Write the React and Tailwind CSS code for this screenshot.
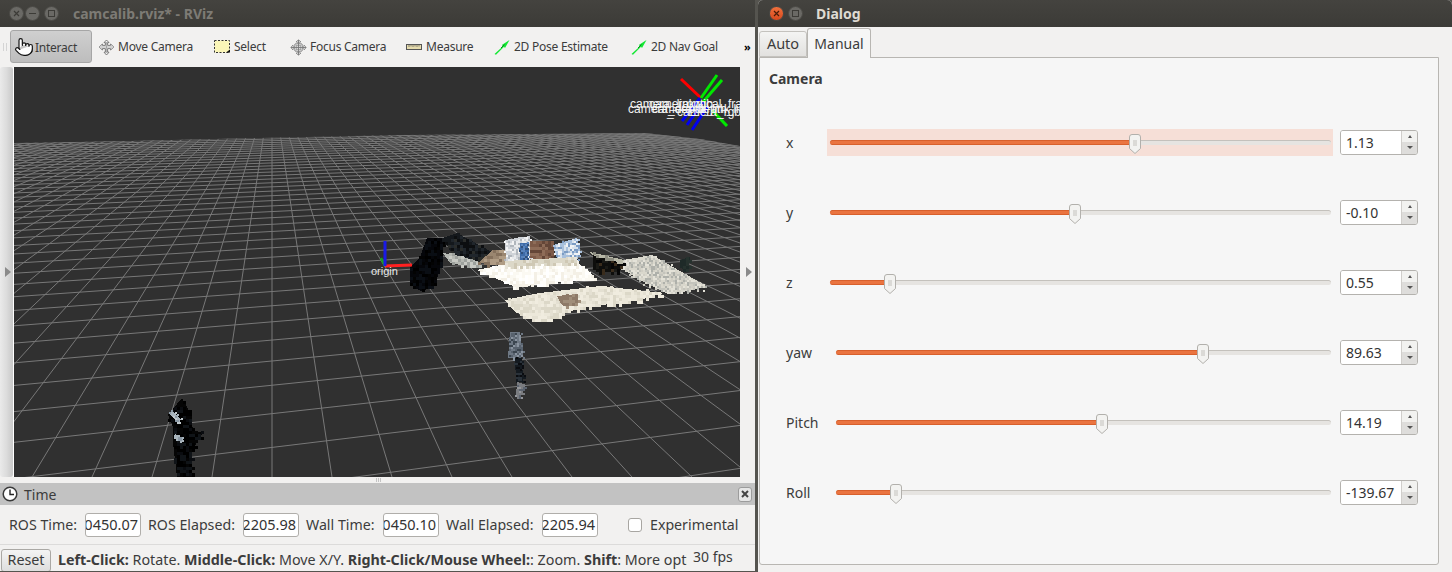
import { Pointer } from 'lucide-react'

const FONT = { fontFamily: '"Noto Sans", sans-serif' }

function rng(seed) {
  let s = seed
  return () => {
    s = (s * 16807) % 2147483647
    return s / 2147483647
  }
}

function inside(pts, x, y) {
  let hit = false
  for (let i = 0, j = pts.length - 1; i < pts.length; j = i++) {
    const [xi, yi] = pts[i]
    const [xj, yj] = pts[j]
    if (yi > y !== yj > y && x < ((xj - xi) * (y - yi)) / (yj - yi) + xi) hit = !hit
  }
  return hit
}

// blocky point cloud patch, looks like the rviz voxels
function Cloud({ pts, colors, seed, size = 3 }) {
  const r = rng(seed)
  const xs = pts.map(p => p[0])
  const ys = pts.map(p => p[1])
  const cells = []
  for (let x = Math.min(...xs) - 3; x < Math.max(...xs) + 3; x += size) {
    for (let y = Math.min(...ys) - 3; y < Math.max(...ys) + 3; y += size) {
      const jx = (r() - 0.5) * 4
      const jy = (r() - 0.5) * 4
      if (inside(pts, x + jx, y + jy)) {
        cells.push(<rect key={`${x}-${y}`} x={x} y={y} width={size} height={size} fill={colors[Math.floor(r() * colors.length)]} />)
      }
    }
  }
  return (
    <g shapeRendering="crispEdges">
      <polygon points={pts.map(p => p.join(',')).join(' ')} fill={colors[0]} />
      {cells}
    </g>
  )
}

const VP1 = [272, 80]
const VP2 = [3500, 55]
const FAR_EDGE = '14,143 130,141 260,138 400,135 535,134 645,133 700,139 740,146 740,477 14,477'

function Grid() {
  const lines = []
  for (let k = -60; k < 90; k++) {
    const bx = 272 + 60 * k
    lines.push(<line key={`a${k}`} x1={VP1[0]} y1={VP1[1]} x2={bx} y2={477} />)
  }
  for (let n = -8; n < 46; n++) {
    const v = 0.003509 + 0.00024 * n
    if (v <= 0) continue
    const y = VP2[1] + 1 / v
    const slope = (y - VP2[1]) / (VP2[0] - 273)
    lines.push(<line key={`b${n}`} x1={14} y1={y + slope * 259} x2={740} y2={y - slope * 467} />)
  }
  return (
    <g>
      <defs>
        <clipPath id="floor">
          <polygon points={FAR_EDGE} />
        </clipPath>
      </defs>
      <g clipPath="url(#floor)">
        <polygon points={FAR_EDGE} fill="#303030" />
        <g stroke="#787878" strokeWidth="1">{lines}</g>
      </g>
    </g>
  )
}

function Scene() {
  return (
    <svg className="block w-full h-full" viewBox="14 67 726 410">
      <rect x="14" y="67" width="726" height="410" fill="#303030" />
      <Grid />

      {/* person far left */}
      <Cloud seed={11} pts={[[182, 398], [190, 413], [193, 430], [203, 433], [190, 453], [192, 477], [177, 477], [173, 443], [173, 427], [168, 415]]} colors={['#050505', '#000000', '#0a0c10', '#000000', '#101418']} />
      <Cloud seed={12} size={2} pts={[[168, 413], [172, 411], [181, 419], [179, 423]]} colors={['#a8b4bc', '#c0c8cc', '#8a98a4']} />
      <Cloud seed={13} size={2} pts={[[175, 434], [183, 438], [184, 442], [176, 440]]} colors={['#a8b4bc', '#8a98a4']} />

      {/* person center */}
      <Cloud seed={14} size={2} pts={[[510, 332], [520, 332], [522, 357], [508, 358]]} colors={['#6e7884', '#58626e', '#8a94a0', '#3c4650']} />
      <Cloud seed={15} size={2} pts={[[515, 358], [522, 358], [523, 382], [516, 382]]} colors={['#141a20', '#0a0c10', '#2a323a']} />
      <Cloud seed={16} size={2} pts={[[517, 382], [526, 385], [520, 397], [516, 397]]} colors={['#7a7c80', '#5c6470', '#94969a']} />

      {/* floor patches */}
      <Cloud seed={21} pts={[[477, 270], [510, 263], [575, 260], [595, 277], [545, 284], [515, 287], [495, 278]]} colors={['#fbf9f2', '#ffffff', '#f4f0e6', '#fffefa']} />
      <Cloud seed={22} pts={[[505, 300], [540, 293], [600, 286], [664, 293], [640, 300], [580, 308], [540, 322], [515, 312]]} colors={['#ece8da', '#f0ecdf', '#e4e0d2', '#dcd8c8']} />
      <Cloud seed={23} size={3} pts={[[557, 296], [578, 294], [577, 303], [562, 305]]} colors={['#8e7a68', '#a08e7a']} />
      <Cloud seed={24} size={2} pts={[[612, 262], [652, 255], [708, 287], [668, 294], [640, 280]]} colors={['#d9d7cc', '#c4c4bc', '#e4e2d8', '#aeb0aa', '#d0cec4']} />

      {/* dark wall left and ridge */}
      <Cloud seed={25} pts={[[427, 238], [444, 238], [441, 257], [437, 280], [423, 292], [410, 285], [410, 267], [420, 257]]} colors={['#05060a', '#000000', '#0a0e14', '#030303']} />
      <Cloud seed={26} pts={[[442, 238], [457, 233], [492, 252], [477, 265], [455, 258]]} colors={['#14181c', '#20262c', '#0c0e10', '#2a2c2a']} />
      <Cloud seed={27} pts={[[443, 253], [460, 256], [480, 262], [480, 267], [450, 263]]} colors={['#b5b8b2', '#9ca09c', '#c8cac4']} />

      {/* objects on the table */}
      <Cloud seed={28} pts={[[478, 263], [493, 250], [510, 250], [507, 265]]} colors={['#9a8670', '#84705c', '#b09c84']} />
      <Cloud seed={29} size={2} pts={[[505, 240], [530, 236], [532, 260], [506, 264]]} colors={['#cfd3d8', '#e8eaec', '#b0b6bc', '#f4f4f4']} />
      <Cloud seed={30} size={2} pts={[[520, 243], [528, 243], [528, 260], [520, 260]]} colors={['#3d6ba8', '#5a84bc', '#30507c']} />
      <Cloud seed={31} pts={[[530, 241], [551, 241], [555, 256], [530, 258]]} colors={['#7d5a48', '#8e6c58', '#644638']} />
      <Cloud seed={32} size={2} pts={[[553, 245], [577, 238], [581, 257], [557, 258]]} colors={['#a8c0dc', '#d8e2ec', '#7c9cc4', '#f0f2f4']} />
      <Cloud seed={33} pts={[[505, 261], [575, 257], [575, 262], [505, 267]]} colors={['#dcd8c8', '#cfc8b4', '#e8e4d8']} />

      {/* dark patch right of table */}
      <Cloud seed={34} pts={[[593, 254], [623, 262], [620, 272], [593, 270]]} colors={['#0e0e0c', '#1a1a16', '#060606', '#3a2c1c']} />
      <Cloud seed={35} pts={[[590, 252], [624, 260], [622, 263], [592, 255]]} colors={['#b8b8a8', '#8c8c80', '#d0d0c4']} />
      <Cloud seed={36} pts={[[680, 260], [690, 257], [688, 270], [680, 268]]} colors={['#1e2a28', '#26322e']} />

      {/* origin axes */}
      <line x1="381" y1="258" x2="385" y2="266" stroke="#16a020" strokeWidth="2.5" />
      <line x1="385" y1="266" x2="412" y2="265" stroke="#ff2020" strokeWidth="3" />
      <line x1="385" y1="266" x2="385" y2="241" stroke="#1a1ae6" strokeWidth="3" />
      <text x="371" y="275" fill="#e8e8e8" fontSize="11" style={{ fontFamily: '"Liberation Sans", sans-serif' }}>origin</text>

      {/* tf frames in the corner */}
      <g strokeWidth="3">
        <line x1="681" y1="79" x2="701" y2="98" stroke="#ff0000" />
        <line x1="717" y1="75" x2="701" y2="98" stroke="#00e800" />
        <line x1="722" y1="80" x2="703" y2="102" stroke="#00e800" />
        <line x1="727" y1="126" x2="712" y2="110" stroke="#00e800" />
        <line x1="700" y1="98" x2="682" y2="121" stroke="#0000f0" />
        <line x1="703" y1="102" x2="687" y2="125" stroke="#0000f0" />
        <line x1="708" y1="106" x2="692" y2="130" stroke="#0000f0" />
      </g>
      <g fill="#f4f4f4" fontSize="12" style={{ fontFamily: '"Liberation Sans", sans-serif' }}>
        <text x="630" y="108">camera_link</text>
        <text x="649" y="108">camera_rgb</text>
        <text x="680" y="108">_optical_frame</text>
        <text x="628" y="113">camera_depth</text>
        <text x="652" y="113">camera_ir_link</text>
        <text x="690" y="113">_depth_link</text>
        <text x="667" y="116">_ camera_rgb_link</text>
      </g>
    </svg>
  )
}

function WinBtn({ color = 'bg-[#6a6965]', children, className = '' }) {
  return (
    <div className={`w-[15px] h-[15px] rounded-full flex items-center justify-center border border-[#4a4945] ${color} ${className}`}>
      {children}
    </div>
  )
}

function TitleBar({ children, className = '' }) {
  return (
    <div className={`h-[27px] shrink-0 bg-gradient-to-b from-[#44433f] to-[#3c3b37] flex items-center ${className}`}>
      {children}
    </div>
  )
}

function MoveIcon() {
  return (
    <svg width="17" height="17" viewBox="0 0 17 17" fill="#f4f4f4" stroke="#6e6e6e" strokeWidth="0.9">
      <path d="M8.5 1 L11 3.6 H9.6 V6.4 H12.6 V5 L15.8 8 L12.6 11 V9.6 H9.6 V13.2 H11 L8.5 16 L6 13.2 H7.4 V9.6 H4.4 V11 L1.2 8 L4.4 5 V6.4 H7.4 V3.6 H6 Z" />
      <path d="M3 8h11M8.5 3v11" fill="none" strokeWidth="0.5" />
    </svg>
  )
}

function SelectIcon() {
  return (
    <svg width="16" height="16" viewBox="0 0 16 16">
      <rect x="0.5" y="1.5" width="15" height="12" fill="#fbf6b8" stroke="#333" strokeDasharray="2 1.5" />
      <path d="M12 13.5h4v-3z" fill="#111" />
    </svg>
  )
}

function FocusIcon() {
  return (
    <svg width="17" height="17" viewBox="0 0 17 17" fill="none" stroke="#777" strokeWidth="0.9">
      <circle cx="8.5" cy="8.5" r="4.8" fill="#e6e6e6" />
      <path d="M8.5 1v15M1 8.5h15M6 3l2.5-2 2.5 2M6 14l2.5 2 2.5-2M3 6l-2 2.5 2 2.5M14 6l2 2.5-2 2.5" />
      <ellipse cx="8.5" cy="8.5" rx="2" ry="4.8" strokeWidth="0.5" />
      <ellipse cx="8.5" cy="8.5" rx="4.8" ry="2" strokeWidth="0.5" />
    </svg>
  )
}

function MeasureIcon() {
  return (
    <svg width="16" height="16" viewBox="0 0 16 16">
      <rect x="0.5" y="5.5" width="15" height="5" fill="#e6dcae" stroke="#555" />
      <path d="M3 6v2M5 6v1.5M7 6v2M9 6v1.5M11 6v2M13 6v1.5" stroke="#555" strokeWidth="0.7" />
    </svg>
  )
}

function ArrowIcon() {
  return (
    <svg width="16" height="16" viewBox="0 0 16 16">
      <path d="M0.5 15 L9 7.2 L7.8 6 L15.5 1 L11 9 L10 7.8 L2 15.8 Z" fill="#12e832" />
      <path d="M7 9 L10.5 5.5" stroke="#0a8a20" strokeWidth="1" />
    </svg>
  )
}

const TOOLS = [
  { label: 'Move Camera', icon: <MoveIcon />, w: 75 },
  { label: 'Select', icon: <SelectIcon />, w: 35 },
  { label: 'Focus Camera', icon: <FocusIcon />, w: 75 },
  { label: 'Measure', icon: <MeasureIcon />, w: 47 },
  { label: '2D Pose Estimate', icon: <ArrowIcon />, w: 96 },
  { label: '2D Nav Goal', icon: <ArrowIcon />, w: 67 },
]

function Toolbar() {
  return (
    <div className="h-[40px] shrink-0 bg-[#f2f1f0] flex items-center pl-[3px] text-[12px] tracking-[-0.25px] text-[#3c3c3c] whitespace-nowrap">
      <div className="w-[4px] h-[8px] mr-[3px] border-x border-[#d4d4d4]" />
      <div className="w-[82px] h-[33px] rounded-[3px] border border-[#a6a6a6] bg-gradient-to-b from-[#cfcfcf] to-[#bdbdbd] flex items-center pl-[3px] gap-[1px] mt-[-1px]">
        <Pointer size={20} strokeWidth={1.4} color="#111" fill="#fff" />
        <span className="mt-[2px]">Interact</span>
      </div>
      <div className="flex items-center gap-[21px] ml-[6px]">
        {TOOLS.map(t => (
          <div key={t.label} className="flex items-center">
            <div className="w-[20px] shrink-0">{t.icon}</div>
            <span className="block" style={{ width: t.w }}>{t.label}</span>
          </div>
        ))}
      </div>
      <span className="ml-[26px] text-[11px] font-bold text-black">»</span>
    </div>
  )
}

function SideStrip({ left }) {
  const tri = <div className="w-0 h-0 border-y-[5px] border-y-transparent border-l-[6px] border-l-[#8a8a8a]" />
  if (left) {
    return (
      <div className="w-[14px] shrink-0 bg-[#f2f1f0] border-r border-white">
        <div className="h-full rounded-[3px] bg-gradient-to-r from-[#eaeaea] via-[#dcdcdc] to-[#c8c8c8] flex items-center pl-[5px]">{tri}</div>
      </div>
    )
  }
  return <div className="w-[15px] shrink-0 bg-[#f2f1f0] flex items-center pl-[6px]">{tri}</div>
}

function ClippedField({ value, className = '' }) {
  return (
    <div className={`h-[24px] rounded-[3px] border border-[#b0aeaa] bg-white flex items-center justify-end overflow-hidden pr-[2px] whitespace-nowrap text-[14.5px] text-[#333] ${className}`}>
      <span className="shrink-0">{value}</span>
    </div>
  )
}

function TimePanel() {
  return (
    <div className="shrink-0 bg-[#f2f1f0] text-[#3c3c3c]">
      <div className="h-[6px] flex justify-center items-center gap-[1px] pl-[2px]">
        <i className="w-px h-[4px] bg-[#c4c4c4]" />
        <i className="w-px h-[4px] bg-[#c4c4c4]" />
        <i className="w-px h-[4px] bg-[#c4c4c4]" />
      </div>
      <div className="h-[22px] bg-[#c2c2c2] flex items-center pl-[2px] pr-[3px]">
        <svg width="16" height="16" viewBox="0 0 16 16">
          <circle cx="8" cy="8" r="6.8" fill="#fff" stroke="#3a3a3a" strokeWidth="1.5" />
          <path d="M8 3.6V8.5H12" fill="none" stroke="#222" strokeWidth="1.4" />
        </svg>
        <span className="ml-[6px] text-[14px]">Time</span>
        <div className="ml-auto w-[14px] h-[15px] rounded-[3px] border border-[#9c9c9c] bg-[#e6e6e6] flex items-center justify-center">
          <svg width="8" height="8" viewBox="0 0 8 8"><path d="M1 1l6 6M7 1L1 7" stroke="#444" strokeWidth="2" /></svg>
        </div>
      </div>
      <div className="h-[40px] flex items-center pl-[9px] text-[14.2px] border-b border-[#dcdbda] whitespace-nowrap">
        <span className="w-[76px]">ROS Time:</span>
        <ClippedField value="0450.07" className="w-[56px]" />
        <span className="w-[102px] pl-[7px]">ROS Elapsed:</span>
        <ClippedField value="2205.98" className="w-[56px]" />
        <span className="w-[84px] pl-[7px]">Wall Time:</span>
        <ClippedField value="0450.10" className="w-[56px]" />
        <span className="w-[103px] pl-[7px]">Wall Elapsed:</span>
        <ClippedField value="2205.94" className="w-[56px]" />
        <div className="ml-[30px] w-[14px] h-[14px] rounded-[3px] border border-[#a8a6a2] bg-white" />
        <span className="ml-[8px]">Experimental</span>
      </div>
      <div className="h-[26px] flex items-center whitespace-nowrap text-[14.3px] overflow-hidden">
        <div className="ml-[1px] mt-[4px] w-[50px] h-[23px] rounded-[3px] border border-[#aaa8a4] bg-gradient-to-b from-[#f4f4f4] to-[#dedede] flex items-center justify-center">Reset</div>
        <div className="ml-[7px] mt-[4px] w-[629px] overflow-hidden">
          <b>Left-Click:</b> Rotate. <b>Middle-Click:</b> Move X/Y. <b>Right-Click/Mouse Wheel:</b>: Zoom. <b>Shift</b>: More options.
        </div>
        <span className="ml-[6px] mt-[-3px] text-[14px]">30 fps</span>
      </div>
    </div>
  )
}

function RvizWindow() {
  return (
    <div className="w-[755px] h-full shrink-0 flex flex-col">
      <TitleBar className="pl-[9px]">
        <WinBtn>
          <svg width="7" height="7" viewBox="0 0 7 7"><path d="M1 1l5 5M6 1L1 6" stroke="#3c3b37" strokeWidth="1.2" /></svg>
        </WinBtn>
        <WinBtn className="ml-[1px]"><div className="w-[7px] h-px bg-[#3c3b37]" /></WinBtn>
        <WinBtn className="ml-[4px]"><div className="w-[7px] h-[7px] border border-[#3c3b37]" /></WinBtn>
        <span className="ml-[14px] text-[14px] font-bold text-[#7d7b75]">camcalib.rviz* - RViz</span>
      </TitleBar>
      <Toolbar />
      <div className="h-[410px] shrink-0 flex">
        <SideStrip left />
        <div className="flex-1 min-w-0"><Scene /></div>
        <SideStrip />
      </div>
      <TimePanel />
    </div>
  )
}

const SLIDERS = [
  { name: 'x', value: '1.13', thumb: 305, active: true },
  { name: 'y', value: '-0.10', thumb: 245 },
  { name: 'z', value: '0.55', thumb: 60 },
  { name: 'yaw', value: '89.63', thumb: 367, wide: true },
  { name: 'Pitch', value: '14.19', thumb: 266, wide: true },
  { name: 'Roll', value: '-139.67', thumb: 60, wide: true },
]

function Thumb({ left }) {
  return (
    <svg className="absolute top-1/2 -translate-y-1/2 -translate-x-1/2 mt-[1px]" style={{ left }} width="13" height="21" viewBox="0 0 13 21">
      <path d="M1 3.5a2.5 2.5 0 0 1 2.5-2.5h6a2.5 2.5 0 0 1 2.5 2.5V15L6.5 20 1 15Z" fill="#f3f3f1" stroke="#b2b0ac" />
      <path d="M4.5 7.5h4M4.5 9.5h4M4.5 11.5h4" stroke="#b6b4b0" strokeWidth="0.8" />
    </svg>
  )
}

function SliderRow({ s }) {
  return (
    <div className="h-[70px] flex items-center pl-[26px] text-[14px] text-[#3c3c3c]">
      <span className={s.wide ? 'w-[50px]' : 'w-[41px]'}>{s.name}</span>
      <div className={`relative flex-1 h-[27px] flex items-center ${s.wide ? 'pr-[2px]' : 'pl-[3px] pr-[2px]'} ${s.active ? 'bg-[#f6dfd7]' : ''}`}>
        <div className="relative w-full h-[5px] rounded-full bg-[#e6e4e1] border-t border-[#c4c1bc]">
          <div className="absolute left-0 top-[-1px] h-[5px] rounded-full bg-[#ea7440] border-y border-[#d8602c]" style={{ width: s.thumb }} />
          <Thumb left={s.thumb} />
        </div>
      </div>
      <div className="ml-[7px] w-[78px] h-[25px] flex rounded-[3px] border border-[#b4b2ae] overflow-hidden">
        <div className="flex-1 bg-white flex items-center pl-[5px] text-[14px] text-[#333]">{s.value}</div>
        <div className="w-[16px] border-l border-[#d0cecb] flex flex-col">
          <div className="flex-1 bg-[#f2f2f0] flex items-center justify-center">
            <div className="w-0 h-0 border-x-[2.5px] border-x-transparent border-b-[3px] border-b-[#555]" />
          </div>
          <div className="flex-1 bg-[#dedddb] flex items-center justify-center">
            <div className="w-0 h-0 border-x-[3px] border-x-transparent border-t-[3px] border-t-[#555]" />
          </div>
        </div>
      </div>
    </div>
  )
}

function DialogWindow() {
  return (
    <div className="flex-1 h-full min-w-0 flex flex-col bg-[#f2f1f0] rounded-t-[5px] overflow-hidden">
      <TitleBar className="pl-[11px]">
        <WinBtn color="bg-gradient-to-b from-[#f0703c] to-[#d8481c]">
          <svg width="7" height="7" viewBox="0 0 7 7"><path d="M1 1l5 5M6 1L1 6" stroke="#4a1c08" strokeWidth="1.2" /></svg>
        </WinBtn>
        <WinBtn className="ml-[4px]"><div className="w-[7px] h-[7px] border border-[#3c3b37]" /></WinBtn>
        <span className="ml-[13px] text-[14px] font-bold text-[#dfdbd2]">Dialog</span>
      </TitleBar>
      <div className="h-[31px] shrink-0 flex items-end pl-[1px] text-[14px] text-[#3c3c3c] relative z-10">
        <div className="w-[48px] h-[26px] rounded-t-[3px] border border-[#c4c2be] bg-gradient-to-b from-[#f4f4f3] to-[#e2e1df] flex items-center justify-center mb-[1px] text-[14.5px]">Auto</div>
        <div className="w-[64px] h-[30px] rounded-t-[3px] border border-b-0 border-[#b8b6b2] bg-[#f6f6f6] flex items-center justify-center">Manual</div>
      </div>
      <div className="ml-[1px] mr-[13px] h-[508px] shrink-0 rounded-b-[3px] border border-[#b8b6b2] bg-[#f6f6f6] mt-[-1px]">
        <div className="pl-[9px] pt-[10px] h-[49px] text-[14px] font-bold text-[#3c3c3c]">Camera</div>
        <div className="pr-[20px]">
          {SLIDERS.map(s => <SliderRow key={s.name} s={s} />)}
        </div>
      </div>
    </div>
  )
}

export default function App() {
  return (
    <div className="w-[1452px] h-[572px] flex bg-[#55544f] overflow-hidden" style={FONT}>
      <RvizWindow />
      <div className="w-[3px] shrink-0 bg-[#55544f]" />
      <DialogWindow />
    </div>
  )
}
